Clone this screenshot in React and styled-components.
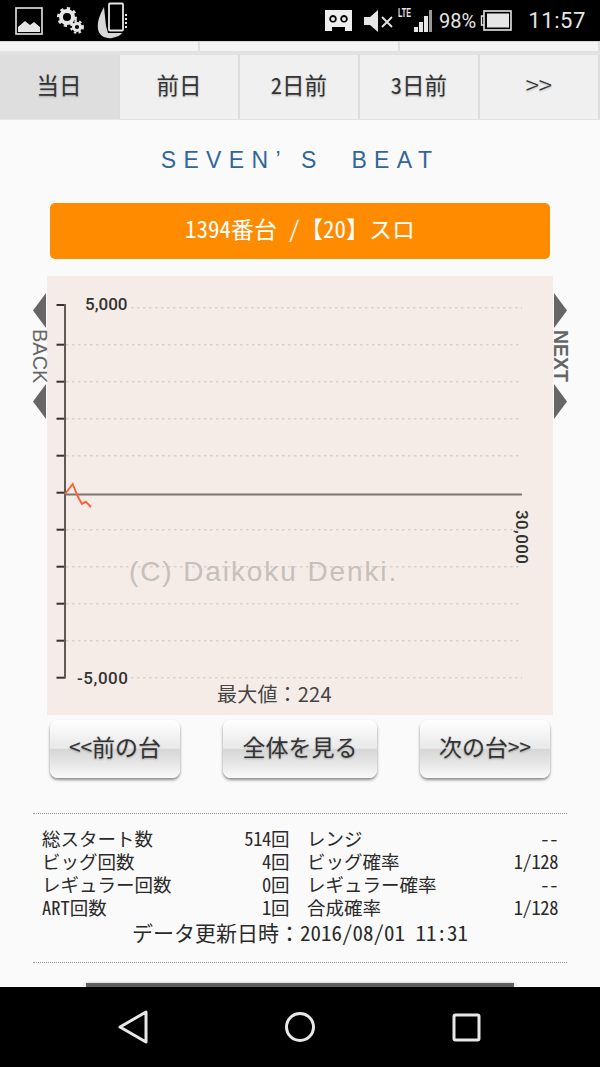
import React from "react";
import styled, { createGlobalStyle } from "styled-components";

const Global = createGlobalStyle`
  html, body { margin: 0; padding: 0; background: #000; }
  * { box-sizing: border-box; }
`;

const jp = `"Noto Sans CJK JP", "Noto Sans", sans-serif`;

const Screen = styled.div`
  position: relative;
  width: 600px;
  height: 1067px;
  overflow: hidden;
  display: flex;
  flex-direction: column;
  background: #fafafa;
  font-family: ${jp};
  font-feature-settings: "hwid";
  color: #2a2a2a;
`;

const StatusBar = styled.header`
  flex: 0 0 41px;
  background: #000;
  display: flex;
  align-items: center;
  justify-content: space-between;
  padding: 0 14px 0 15px;
  color: #e6e6e6;
`;

const StatusGroup = styled.div`
  display: flex;
  align-items: center;
  gap: ${(p) => p.$gap}px;
`;

const VrSlot = styled.span`
  display: flex;
  margin-right: 6px;
`;

const Percent = styled.span`
  font: 20px Roboto, sans-serif;
  margin-left: 3px;
`;

const Clock = styled.span`
  font: 22px Roboto, sans-serif;
  letter-spacing: 0.6px;
  margin-left: 12px;
`;

const SignalWrap = styled.div`
  position: relative;
  width: 34px;
  height: 24px;
`;

const Lte = styled.span`
  position: absolute;
  left: 0;
  top: -3px;
  font: 700 12px "Liberation Sans", sans-serif;
  transform: scaleX(0.6);
  transform-origin: left;
`;

const SubTabs = styled.div`
  flex: 0 0 14px;
  display: grid;
  grid-template-columns: 200px 200px 200px;
  background: #f4f4f4;
  border-top: 1px solid #d8d8d8;
  border-bottom: 4px solid #e2e2e2;
`;

const SubTab = styled.div`
  border-right: 2px solid #e0e0e0;
`;

const Tabs = styled.nav`
  flex: 0 0 65px;
  display: grid;
  grid-template-columns: repeat(5, 120px);
  border-bottom: 1px solid #e4e4e4;
`;

const Tab = styled.div`
  display: flex;
  align-items: center;
  justify-content: center;
  padding-bottom: 6px;
  font-size: 22.5px;
  color: #333;
  text-shadow: 0 1px 2px rgba(0, 0, 0, 0.25);
  background: ${(p) => (p.$active ? "#dedede" : "#f0f0f0")};
  border-right: 2px solid #dcdcdc;
`;

const Chevrons = styled.span`
  font-size: 26px;
  font-weight: 300;
  line-height: 1;
`;

const Title = styled.h1`
  flex: 0 0 83px;
  margin: 0;
  display: flex;
  align-items: center;
  justify-content: center;
  padding-bottom: 3px;
  font: 400 23px "Liberation Sans", sans-serif;
  letter-spacing: 7.4px;
  white-space: pre;
  color: #32669a;
`;

const Machine = styled.div`
  flex: 0 0 56px;
  margin: 0 50px;
  padding-bottom: 6px;
  border-radius: 5px;
  background: #ff8c00;
  color: #fff;
  display: flex;
  align-items: center;
  justify-content: center;
  font-size: 23px;
`;

const ChartFrame = styled.section`
  position: relative;
  flex: 0 0 439px;
  width: 506px;
  margin: 17px 0 0 47px;
  background: #f5ece7;
`;

const ChartSvg = styled.svg`
  display: block;
`;

const PeakText = styled.text`
  font-family: ${jp};
  font-size: 20px;
  font-feature-settings: normal;
  letter-spacing: 0.2px;
  fill: #444;
`;

const SideNav = styled.div`
  position: absolute;
  top: 17px;
  ${(p) => (p.$side === "left" ? "left: -15px;" : "right: -15px;")}
  width: 15px;
  display: flex;
  flex-direction: column;
  align-items: center;
  color: #666;
`;

const SideLabel = styled.span`
  writing-mode: vertical-rl;
  font: ${(p) => (p.$bold ? 700 : 400)} ${(p) => (p.$bold ? 19.5 : 20)}px/15px "Liberation Sans", sans-serif;
  height: 56px;
  display: flex;
  align-items: center;
  justify-content: center;
`;

const ButtonRow = styled.div`
  flex: 0 0 58px;
  margin: 5px 50px 0;
  display: flex;
  justify-content: space-between;
`;

const GlossButton = styled.div`
  width: ${(p) => p.$w}px;
  padding-bottom: 7px;
  border-radius: 8px;
  display: flex;
  align-items: center;
  justify-content: center;
  font-size: 23px;
  color: #333;
  text-shadow: 0 1px 2px rgba(0, 0, 0, 0.25);
  background: linear-gradient(#fff 0%, #e8e8e8 49%, #d6d6d6 50%, #e6e6e6 75%, #fafafa 100%);
  box-shadow: 0 2px 3px rgba(0, 0, 0, 0.45);
`;

const Stats = styled.section`
  flex: 0 0 150px;
  margin: 35px 33px 0;
  padding: 13px 9px 0;
  border-top: 1px dotted #999;
  border-bottom: 1px dotted #999;
`;

const StatGrid = styled.div`
  display: grid;
  grid-template-columns: 247px 251px;
  column-gap: 18px;
`;

const StatRow = styled.div`
  display: flex;
  justify-content: space-between;
  align-items: center;
  height: 23px;
  line-height: 23px;
  font-size: 18.5px;
  white-space: nowrap;
`;

const StatValue = styled.span`
  letter-spacing: -0.4px;
`;

const Updated = styled.div`
  height: 26px;
  line-height: 26px;
  display: flex;
  align-items: center;
  justify-content: center;
  font-size: 21px;
  white-space: nowrap;
`;

const WideColon = styled.span`
  font-feature-settings: normal;
`;

const NextPanel = styled.div`
  flex: 0 0 5px;
  margin: 20px 86px 0;
  background: #606060;
  box-shadow: 0 0 3px rgba(0, 0, 0, 0.25);
`;

const NavBar = styled.footer`
  position: absolute;
  top: 987px;
  left: 0;
  width: 600px;
  height: 80px;
  background: #000;
`;

/* Status bar icons */
const PictureIcon = () => (
  <svg width="29" height="28" viewBox="0 0 29 28">
    <rect x="1" y="1" width="26" height="26" fill="none" stroke="#e6e6e6" strokeWidth="1.6" />
    <path d="M3 25 V20 L10 14 L15 18 L19 15 L25 20 V25 Z" fill="#e6e6e6" />
  </svg>
);

const GearsIcon = () => (
  <svg width="27" height="28" viewBox="0 0 27 28">
    <circle cx="10" cy="10" r="6" fill="none" stroke="#e6e6e6" strokeWidth="4" />
    <circle cx="10" cy="10" r="8.5" fill="none" stroke="#e6e6e6" strokeWidth="3" strokeDasharray="3.2 3.4" />
    <circle cx="20" cy="20" r="3.6" fill="none" stroke="#e6e6e6" strokeWidth="3" />
    <circle cx="20" cy="20" r="5.8" fill="none" stroke="#e6e6e6" strokeWidth="2.2" strokeDasharray="2.4 2.4" />
  </svg>
);

const HandPhoneIcon = () => (
  <svg width="32" height="37" viewBox="0 0 32 37">
    <rect x="12" y="1.5" width="14" height="27" rx="1" fill="none" stroke="#e6e6e6" strokeWidth="1.8" />
    <path d="M7 5 C3 12 0 20 1 27 C2 34 9 37 15 36 C20 35 24 33 25 31 L11 31 L9 24 Z" fill="#d8d8d8" />
    <path d="M28 13 h2 M28 17 h2 M28 21 h2 M28 25 h2" stroke="#e6e6e6" strokeWidth="2" />
  </svg>
);

const VrIcon = () => (
  <svg width="29" height="23" viewBox="0 0 29 23">
    <path
      fillRule="evenodd"
      fill="#eee"
      d="M1 1 H28 V22 H21 V18 H8 V22 H1 Z M9 6 a3.8 3.8 0 1 0 0.01 0 Z M20 6 a3.8 3.8 0 1 0 0.01 0 Z"
    />
    <circle cx="9" cy="10" r="2" fill="#eee" />
    <circle cx="20" cy="10" r="2" fill="#eee" />
  </svg>
);

const MuteIcon = () => (
  <svg width="31" height="24" viewBox="0 0 31 24">
    <path d="M1 8 H7 L15 1 V23 L7 16 H1 Z" fill="#e6e6e6" />
    <path d="M19 8 L29 18 M29 8 L19 18" stroke="#e6e6e6" strokeWidth="1.8" />
  </svg>
);

const SignalBars = () => (
  <svg width="26" height="24" viewBox="0 0 26 24" style={{ position: "absolute", right: 0, top: 0 }}>
    <rect x="8" y="18" width="4" height="5" fill="#e6e6e6" />
    <rect x="13" y="13" width="4" height="10" fill="#e6e6e6" />
    <rect x="18" y="7" width="4" height="16" fill="#e6e6e6" />
    <rect x="23" y="1" width="3" height="22" fill="#999" />
  </svg>
);

const BatteryIcon = () => (
  <svg width="32" height="21" viewBox="0 0 32 21">
    <path d="M4 6 H1.5 V15 H4" fill="none" stroke="#e6e6e6" strokeWidth="1.4" />
    <rect x="4" y="1" width="27" height="19" fill="none" stroke="#e6e6e6" strokeWidth="1.6" />
    <rect x="7" y="3.5" width="22" height="14" fill="#e6e6e6" />
  </svg>
);

/* Slump chart: difference in medals against start count */
const TICKS = [29, ...Array.from({ length: 10 }, (_, i) => 68.7 + i * 37)];
const SLUMP = "18,218 25.7,208 31,221 35,228 38.7,225.7 44,231";

const SlumpChart = () => (
  <ChartSvg width="506" height="439" viewBox="0 0 506 439">
    {TICKS.map((y, i) => (
      <g key={y}>
        {i !== 5 && (
          <line
            x1={i === 0 || i === 10 ? 84 : 19}
            x2="475"
            y1={i === 0 ? 31.7 : y}
            y2={i === 0 ? 31.7 : y}
            stroke="#d6d0cb"
            strokeWidth="1.4"
            strokeDasharray="2.5 3.5"
          />
        )}
        <line x1="9.5" x2="18" y1={y} y2={y} stroke="#333" strokeWidth="2" />
      </g>
    ))}
    <line x1="18" x2="18" y1="28" y2="402.5" stroke="#5f5a58" strokeWidth="2" />
    <line x1="18" x2="475" y1="218.5" y2="218.5" stroke="#7c7472" strokeWidth="2" />
    <polyline points={SLUMP} fill="none" stroke="#ff5a32" strokeWidth="1.8" />
    <g fontFamily="Roboto, sans-serif" fontSize="17" fontWeight="500" fill="#333">
      <text x="38" y="34">5,000</text>
      <text x="30" y="408" textLength="51">-5,000</text>
      <text transform="translate(469 234) rotate(90)" textLength="54">30,000</text>
    </g>
    <text x="82" y="305" fontFamily="Liberation Sans, sans-serif" fontSize="28" letterSpacing="1.9" fill="#c6c0bc">
      (C) Daikoku Denki.
    </text>
    <PeakText x="170" y="426">最大値：224</PeakText>
  </ChartSvg>
);

const Arrow = ({ left }) => (
  <svg width="13" height="35" viewBox="0 0 13 35">
    <path d={left ? "M13 0 L0 17.5 L13 35 Z" : "M0 0 L13 17.5 L0 35 Z"} fill="#666" />
  </svg>
);

const TABS = ["当日", "前日", "2日前", "3日前"];

const STATS = [
  ["総スタート数", "514回", "レンジ", "--"],
  ["ビッグ回数", "4回", "ビッグ確率", "1/128"],
  ["レギュラー回数", "0回", "レギュラー確率", "--"],
  ["ART回数", "1回", "合成確率", "1/128"],
];

export default function App() {
  return (
    <Screen>
      <Global />
      <StatusBar>
        <StatusGroup $gap={13}>
          <PictureIcon />
          <GearsIcon />
          <HandPhoneIcon />
        </StatusGroup>
        <StatusGroup $gap={4}>
          <VrSlot>
            <VrIcon />
          </VrSlot>
          <MuteIcon />
          <SignalWrap>
            <Lte>LTE</Lte>
            <SignalBars />
          </SignalWrap>
          <Percent>98%</Percent>
          <BatteryIcon />
          <Clock>11:57</Clock>
        </StatusGroup>
      </StatusBar>

      <SubTabs>
        <SubTab />
        <SubTab />
        <SubTab />
      </SubTabs>

      <Tabs>
        {TABS.map((t, i) => (
          <Tab key={t} $active={i === 0}>{t}</Tab>
        ))}
        <Tab>
          <Chevrons>&gt;&gt;</Chevrons>
        </Tab>
      </Tabs>

      <Title>SEVEN’ S  BEAT</Title>
      <Machine>1394番台 /【20】スロ</Machine>

      <ChartFrame>
        <SlumpChart />
        <SideNav $side="left">
          <Arrow left />
          <SideLabel>BACK</SideLabel>
          <Arrow left />
        </SideNav>
        <SideNav $side="right">
          <Arrow />
          <SideLabel $bold>NEXT</SideLabel>
          <Arrow />
        </SideNav>
      </ChartFrame>

      <ButtonRow>
        <GlossButton $w={130}>&lt;&lt;前の台</GlossButton>
        <GlossButton $w={154}>全体を見る</GlossButton>
        <GlossButton $w={130}>次の台&gt;&gt;</GlossButton>
      </ButtonRow>

      <Stats>
        {STATS.map(([a, b, c, d]) => (
          <StatGrid key={a}>
            <StatRow>
              <span>{a}</span>
              <StatValue>{b}</StatValue>
            </StatRow>
            <StatRow>
              <span>{c}</span>
              <StatValue>{d}</StatValue>
            </StatRow>
          </StatGrid>
        ))}
        <Updated>
          データ更新日時<WideColon>：</WideColon>2016/08/01 11:31
        </Updated>
      </Stats>

      <NextPanel />

      <NavBar>
        <svg width="600" height="80" viewBox="0 0 600 80">
          <path d="M146 25 V55 L120 40 Z" fill="none" stroke="#e8e8e8" strokeWidth="3" strokeLinejoin="round" />
          <circle cx="300" cy="40" r="13.5" fill="none" stroke="#e8e8e8" strokeWidth="3" />
          <rect x="454" y="28" width="25" height="25" rx="1.5" fill="none" stroke="#e8e8e8" strokeWidth="3" />
        </svg>
      </NavBar>
    </Screen>
  );
}
